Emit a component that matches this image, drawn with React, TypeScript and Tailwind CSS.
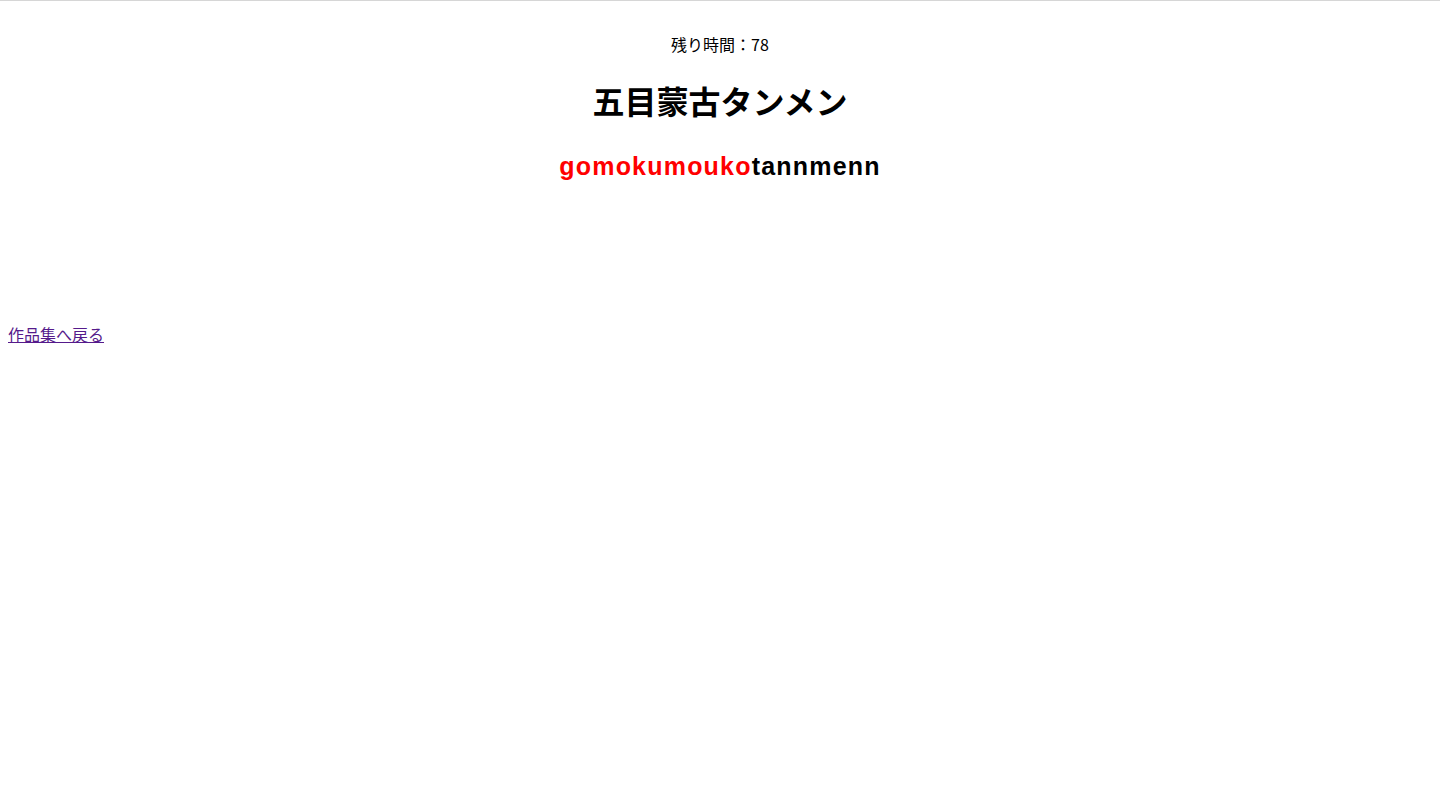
export default function App() {
  return (
    <div className="min-h-screen bg-white border-t border-[#d6d6d6] px-2 text-black font-['Noto_Sans_CJK_JP','Noto_Sans',sans-serif]">
      <p className="mt-[31px] text-center text-base leading-6">残り時間：78</p>
      <h1 className="mt-[24px] text-center text-[32px] font-bold leading-[40px]">五目蒙古タンメン</h1>
      <p className="mt-[30px] text-center text-[25px] font-bold leading-8 tracking-[1.2px] font-['Liberation_Sans','Noto_Sans_CJK_JP',sans-serif]">
        <span className="text-[#ff0000]">gomokumouko</span>
        <span>tannmenn</span>
      </p>
      <a href="#" className="mt-[140px] block w-fit text-base leading-6 text-[#551a8b] underline">
        作品集へ戻る
      </a>
    </div>
  )
}
